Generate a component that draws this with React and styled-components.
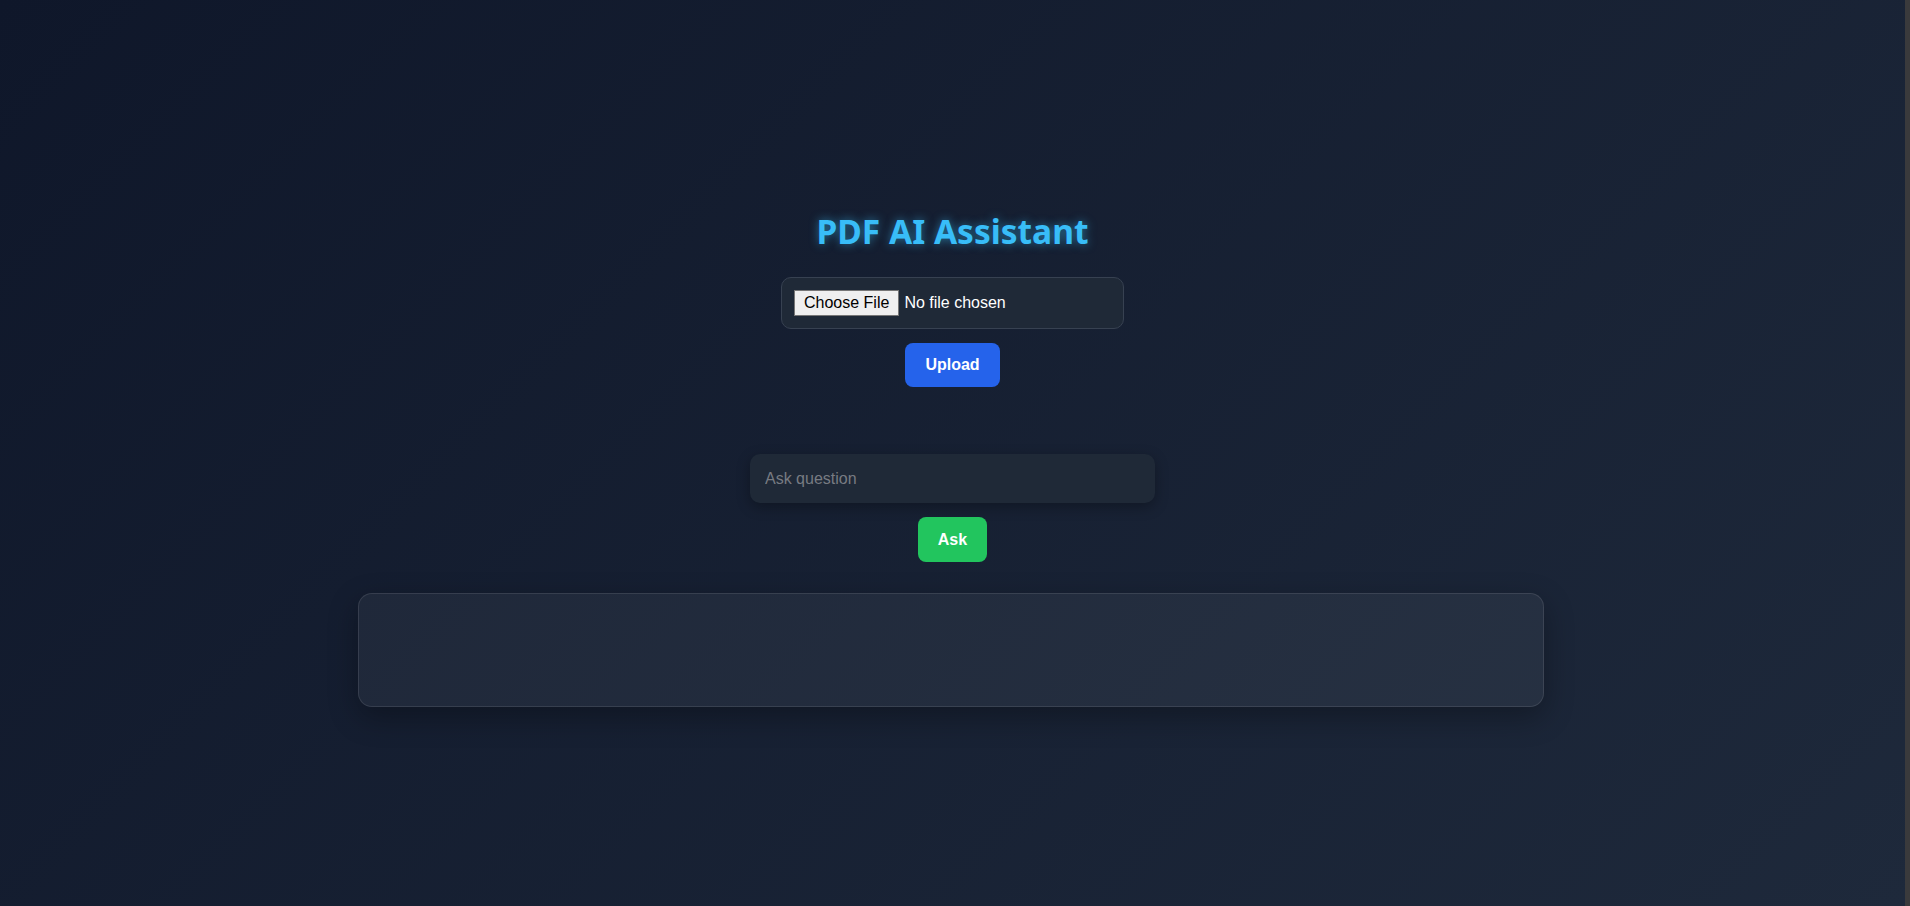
import React from "react";
import styled, { createGlobalStyle } from "styled-components";

const GlobalStyle = createGlobalStyle`
  html, body {
    margin: 0;
    padding: 0;
    height: 100%;
  }
  body {
    background: #0f172a;
    font-family: "Liberation Sans", Arial, sans-serif;
    overflow: hidden;
  }
`;

const Page = styled.div`
  min-height: 100vh;
  box-sizing: border-box;
  border-right: 5px solid #3a3a3c;
  background: linear-gradient(135deg, #0f172a 0%, #1e293b 100%);
  display: flex;
  flex-direction: column;
  align-items: center;
  padding-top: 207px;
  color: #fff;
`;

const Title = styled.h1`
  margin: 0 0 22px;
  font-family: "Noto Sans", "Open Sans", sans-serif;
  font-size: 33.5px;
  line-height: 48px;
  font-weight: 700;
  color: #38bdf8;
  text-shadow: 0 0 10px rgba(56, 189, 248, 0.55);
`;

const FileBox = styled.div`
  width: 343px;
  box-sizing: border-box;
  padding: 12px;
  background: #1f2937;
  border: 1px solid #374151;
  border-radius: 10px;
  display: flex;
`;

const FileInput = styled.input`
  font-family: "Liberation Sans", Arial, sans-serif;
  font-size: 16px;
  color: #fff;
  width: 100%;

  &::file-selector-button {
    font-family: "Liberation Sans", Arial, sans-serif;
    font-size: 16px;
    color: #000;
    background: #efefef;
    border: 1px solid #767676;
    border-radius: 0;
    padding: 3px 9px;
    margin-right: 5px;
  }
`;

const Button = styled.button`
  border: none;
  border-radius: 8px;
  padding: 0 ${(p) => p.$px || 20}px;
  height: ${(p) => p.$h || 44}px;
  background: ${(p) => p.$bg};
  color: #fff;
  font-family: "Liberation Sans", Arial, sans-serif;
  font-size: 16px;
  font-weight: 700;
  cursor: pointer;
  margin-top: ${(p) => p.$mt || 14}px;
`;

const AskInput = styled.input`
  margin-top: 67px;
  width: 405px;
  height: 49px;
  box-sizing: border-box;
  padding: 0 15px;
  border: none;
  outline: none;
  border-radius: 10px;
  background: #1f2937;
  color: #fff;
  font-family: "Liberation Sans", Arial, sans-serif;
  font-size: 16px;
  box-shadow: 0 4px 14px rgba(0, 0, 0, 0.3);

  &::placeholder {
    color: #777b82;
  }
`;

const ResultBox = styled.div`
  margin: 31px 3px 0 0;
  width: 1186px;
  height: 114px;
  box-sizing: border-box;
  border-radius: 14px;
  background: rgba(255, 255, 255, 0.05);
  border: 1px solid rgba(255, 255, 255, 0.1);
  box-shadow: 0 10px 30px rgba(0, 0, 0, 0.3);
`;

export default function App() {
  return (
    <>
      <GlobalStyle />
      <Page>
        <Title>PDF AI Assistant</Title>
        <FileBox>
          <FileInput type="file" accept="application/pdf" />
        </FileBox>
        <Button $bg="#2563eb" $px={20}>Upload</Button>
        <AskInput placeholder="Ask question" />
        <Button $bg="#22c55e" $px={20} $h={45}>Ask</Button>
        <ResultBox />
      </Page>
    </>
  );
}
